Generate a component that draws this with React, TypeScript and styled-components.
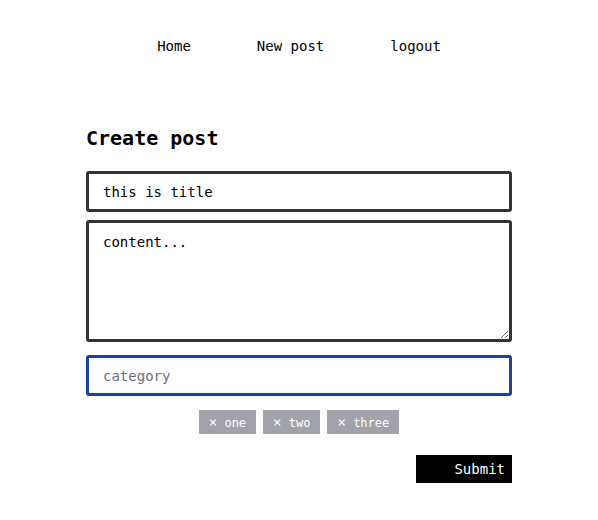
import React, { useState } from "react"
import styled, { createGlobalStyle } from "styled-components"

const GlobalStyle = createGlobalStyle`
	body {
		margin: 0;
		background: #ffffff;
		font-family: "DejaVu Sans Mono", "Liberation Mono", monospace;
		color: #000000;
	}
`

export default function App() {
	const [tags, setTags] = useState(["one", "two", "three"])
	return (
		<>
			<GlobalStyle />
			<Nav>
				<NavLink href="#">Home</NavLink>
				<NavLink href="#">New post</NavLink>
				<NavLink href="#">logout</NavLink>
			</Nav>
			<Main>
				<Heading>Create post</Heading>
				<Form onSubmit={e => e.preventDefault()}>
					<TextInput defaultValue="this is title" />
					<TextArea placeholder="content..." defaultValue="content..." />
					<TextInput placeholder="category" $focused />
					<TagRow>
						{tags.map(tag => (
							<Tag
								key={tag}
								type="button"
								onClick={() => setTags(tags.filter(x => x !== tag))}
							>
								<Cross>×</Cross> {tag}
							</Tag>
						))}
					</TagRow>
					<Actions>
						<SubmitButton type="submit">Submit</SubmitButton>
					</Actions>
				</Form>
			</Main>
		</>
	)
}

const Nav = styled.nav`
	display: flex;
	justify-content: center;
	gap: 66px;
	padding-top: 36px;
	height: 20px;
`

const NavLink = styled.a`
	color: #000000;
	text-decoration: none;
	font-size: 14px;
	line-height: 20px;
`

const Main = styled.main`
	width: 426px;
	margin: 0 auto;
	padding-top: 68px;
`

const Heading = styled.h1`
	margin: 0 0 19px 0;
	font-size: 20px;
	line-height: 28px;
	font-weight: bold;
`

const Form = styled.form`
	display: flex;
	flex-direction: column;
`

const TextInput = styled.input<{ $focused?: boolean }>`
	box-sizing: border-box;
	width: 100%;
	height: 41px;
	padding: 0 14px;
	border: 3px solid ${p => (p.$focused ? "#1e3f9e" : "#333333")};
	border-radius: 3px;
	font-family: inherit;
	font-size: 14px;
	color: #000000;
	outline: none;
	margin-bottom: 8px;

	&::placeholder {
		color: #6b6f7a;
	}
`

const TextArea = styled.textarea`
	box-sizing: border-box;
	width: 100%;
	height: 122px;
	padding: 10px 14px;
	border: 3px solid #333333;
	border-radius: 3px;
	font-family: inherit;
	font-size: 14px;
	line-height: 18px;
	color: #000000;
	outline: none;
	margin-bottom: 13px;
`

const TagRow = styled.div`
	display: flex;
	justify-content: center;
	gap: 7px;
	margin-top: 6px;
`

const Tag = styled.button`
	height: 24px;
	padding: 0 10px;
	border: none;
	border-radius: 0;
	background: #a2a2aa;
	color: #ffffff;
	font-family: inherit;
	font-size: 12px;
	cursor: pointer;
`

const Cross = styled.span`
	font-size: 14px;
`

const Actions = styled.div`
	display: flex;
	justify-content: flex-end;
	margin-top: 21px;
`

const SubmitButton = styled.button`
	width: 96px;
	height: 28px;
	padding: 0 7px;
	border: none;
	background: #000000;
	color: #ffffff;
	font-family: inherit;
	font-size: 14px;
	text-align: right;
	cursor: pointer;
`
